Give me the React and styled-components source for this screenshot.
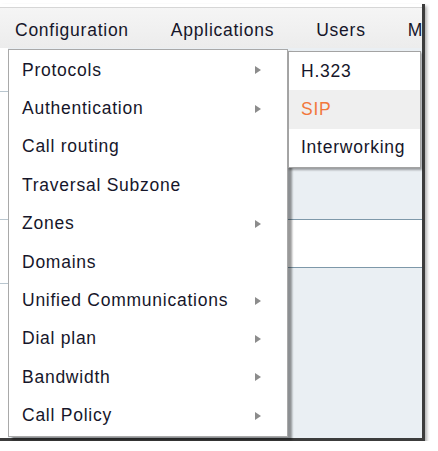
import React from "react";
import styled, { createGlobalStyle } from "styled-components";

const mainItems = [
  { label: "Protocols", sub: true },
  { label: "Authentication", sub: true },
  { label: "Call routing" },
  { label: "Traversal Subzone" },
  { label: "Zones", sub: true },
  { label: "Domains" },
  { label: "Unified Communications", sub: true },
  { label: "Dial plan", sub: true },
  { label: "Bandwidth", sub: true },
  { label: "Call Policy", sub: true },
];

const subItems = [
  { label: "H.323" },
  { label: "SIP", active: true },
  { label: "Interworking" },
];

const topMenu = ["Configuration", "Applications", "Users", "Maintenance"];

export default function App() {
  return (
    <>
      <GlobalStyle />
      <Frame>
        <TopGap />
        <MenuBar>
          {topMenu.map((m) => (
            <TopItem key={m}>{m}</TopItem>
          ))}
        </MenuBar>

        <Content>
          <LeftStrip>
            <StripCell $h={44} />
            <StripCell $h={128} />
            <StripCell $h={64} />
            <StripCell $h={60} $last />
          </LeftStrip>
          <Panel>
            <PanelRow $h={171} $light />
            <PanelRow $h={47} />
            <PanelRow $light $fill />
          </Panel>
        </Content>

        <Dropdown>
          {mainItems.map((it) => (
            <MenuItem key={it.label}>
              <span>{it.label}</span>
              {it.sub && <Arrow />}
            </MenuItem>
          ))}
        </Dropdown>

        <SubMenu>
          {subItems.map((it) => (
            <SubItem key={it.label} $active={it.active}>
              {it.label}
            </SubItem>
          ))}
        </SubMenu>
      </Frame>
    </>
  );
}

// --- STYLES ---

const GlobalStyle = createGlobalStyle`
  body {
    margin: 0;
    background: #ffffff;
    font-family: "Liberation Sans", Arial, sans-serif;
  }
`;

const Frame = styled.div`
  position: relative;
  margin-top: 4px;
  width: 422px;
  height: 434px;
  display: flex;
  flex-direction: column;
  background: #ffffff;
  border-right: 3px solid #3c3c3c;
  border-bottom: 3px solid #3c3c3c;
  box-shadow: 2px 2px 3px rgba(0, 0, 0, 0.3);
`;

const TopGap = styled.div`
  height: 3px;
  background: #ffffff;
  border-bottom: 1px solid #d6d6d6;
`;

const MenuBar = styled.div`
  height: 40px;
  display: flex;
  align-items: center;
  gap: 42px;
  padding-left: 15px;
  background: linear-gradient(to bottom, #f5f5f5, #ececec);
  overflow: hidden;
  white-space: nowrap;
`;

const TopItem = styled.div`
  font-size: 17.5px;
  letter-spacing: 0.75px;
  color: #16162a;
  line-height: 40px;
  padding-top: 3px;
`;

const Content = styled.div`
  flex: 1;
  display: flex;
`;

const LeftStrip = styled.div`
  width: 8px;
  display: flex;
  flex-direction: column;
  background: #ffffff;
`;

const StripCell = styled.div`
  height: ${(p) => p.$h}px;
  border-bottom: ${(p) => (p.$last ? "none" : "1px solid #b9c6cf")};
  box-sizing: border-box;
`;

const Panel = styled.div`
  flex: 1;
  display: flex;
  flex-direction: column;
`;

const PanelRow = styled.div`
  height: ${(p) => (p.$fill ? "auto" : `${p.$h}px`)};
  flex: ${(p) => (p.$fill ? 1 : "none")};
  background: ${(p) => (p.$light ? "#eaeff3" : "#ffffff")};
  border-bottom: ${(p) => (p.$fill ? "none" : "1px solid #7e98a9")};
`;

const Dropdown = styled.div`
  position: absolute;
  left: 8px;
  top: 45px;
  width: 278px;
  padding: 1px 0;
  background: #ffffff;
  border: 1px solid #a9a9a9;
  box-shadow: 4px 3px 2px rgba(0, 0, 0, 0.4);
  z-index: 2;
`;

const MenuItem = styled.div`
  height: 38.4px;
  display: flex;
  align-items: center;
  justify-content: space-between;
  padding: 0 26px 0 13px;
  font-size: 17.5px;
  letter-spacing: 0.75px;
  color: #16162a;
`;

const Arrow = styled.span`
  width: 0;
  height: 0;
  border-left: 6px solid #8c8c8c;
  border-top: 4px solid transparent;
  border-bottom: 4px solid transparent;
`;

const SubMenu = styled.div`
  position: absolute;
  left: 288px;
  top: 47px;
  width: 131px;
  background: #ffffff;
  border: 1px solid #a3a3a3;
  box-shadow: 1px 2px 2px rgba(0, 0, 0, 0.35);
  z-index: 3;
`;

const SubItem = styled.div`
  height: 38.4px;
  display: flex;
  align-items: center;
  padding-left: 12px;
  font-size: 17.5px;
  letter-spacing: 0.75px;
  color: ${(p) => (p.$active ? "#f2773b" : "#16162a")};
  background: ${(p) => (p.$active ? "#efefef" : "#ffffff")};
`;
